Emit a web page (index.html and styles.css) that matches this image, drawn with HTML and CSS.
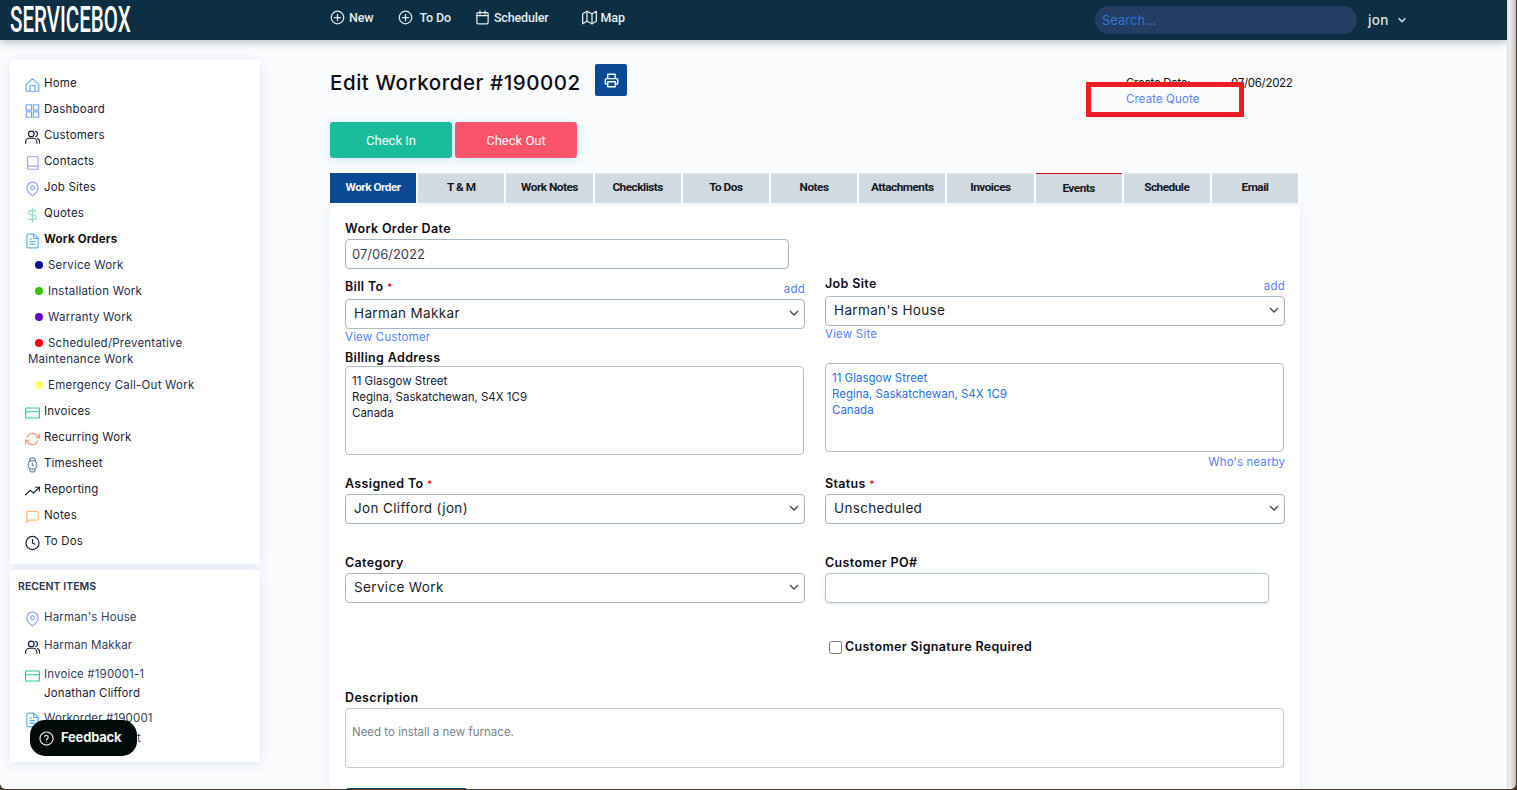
FILE: index.html
```html
<!DOCTYPE html>
<html lang="en">
<head>
<meta charset="utf-8">
<title>Edit Workorder #190002</title>
<link rel="stylesheet" href="styles.css">
</head>
<body>
<svg class="defs" width="0" height="0" aria-hidden="true">
  <symbol id="i-home" viewBox="0 0 24 24"><path d="M2 11 12 2l10 9v11H2z"/><path d="M8 22V13h8v9"/></symbol>
  <symbol id="i-grid" viewBox="0 0 24 24"><rect x="2" y="2" width="8.500" height="8.500"/><rect x="13.500" y="2" width="8.500" height="8.500"/><rect x="2" y="13.500" width="8.500" height="8.500"/><rect x="13.500" y="13.500" width="8.500" height="8.500"/></symbol>
  <symbol id="i-users" viewBox="0 0 24 24"><path d="M1 22v-2a6 6 0 0 1 6-6h6a6 6 0 0 1 6 6v2"/><circle cx="10" cy="7" r="4.500"/><path d="M17 3a4.500 4.500 0 0 1 0 8.500M20 14.500a6 6 0 0 1 3.500 5.500v2"/></symbol>
  <symbol id="i-book" viewBox="0 0 24 24"><path d="M4 19V3a1 1 0 0 1 1-1h16v20H6a2 2 0 0 1-2-2v-1a2 2 0 0 1 2-2h15"/></symbol>
  <symbol id="i-pin" viewBox="0 0 24 24"><path d="M21 10c0 7-9 13-9 13s-9-6-9-13a9 9 0 0 1 18 0z"/><circle cx="12" cy="10" r="3"/></symbol>
  <symbol id="i-dollar" viewBox="0 0 24 24"><path d="M12 1v22M17 5H9.500a3.500 3.500 0 0 0 0 7h5a3.500 3.500 0 0 1 0 7H6"/></symbol>
  <symbol id="i-file" viewBox="0 0 24 24"><path d="M14 1H5a2 2 0 0 0-2 2v18a2 2 0 0 0 2 2h14a2 2 0 0 0 2-2V8z"/><path d="M14 1v7h7M16 13H8M16 17H8M10 9H8"/></symbol>
  <symbol id="i-card" viewBox="0 0 24 24"><rect x="1" y="4" width="22" height="16" rx="1"/><path d="M1 10h22"/></symbol>
  <symbol id="i-refresh" viewBox="0 0 24 24"><path d="M23 4v6h-6M1 20v-6h6"/><path d="M3.500 9a9 9 0 0 1 14.900-3.400L23 10M1 14l4.600 4.400A9 9 0 0 0 20.500 15"/></symbol>
  <symbol id="i-watch" viewBox="0 0 24 24"><circle cx="12" cy="12" r="7"/><path d="M12 9v3l1.500 1.500M16.500 17.500l-.4 4a2 2 0 0 1-2 1.500H9.900a2 2 0 0 1-2-1.500l-.4-4M7.500 6.500l.4-4a2 2 0 0 1 2-1.500h4.200a2 2 0 0 1 2 1.500l.4 4"/></symbol>
  <symbol id="i-trend" viewBox="0 0 24 24"><path d="m23 6-9.500 9.500-5-5L1 18"/><path d="M17 6h6v6"/></symbol>
  <symbol id="i-note" viewBox="0 0 24 24"><path d="M21 15a2 2 0 0 1-2 2H7l-4 4V5a2 2 0 0 1 2-2h14a2 2 0 0 1 2 2z"/></symbol>
  <symbol id="i-clock" viewBox="0 0 24 24"><circle cx="12" cy="12" r="10.500"/><path d="M12 6v6l4 2"/></symbol>
  <symbol id="i-plus" viewBox="0 0 24 24"><circle cx="12" cy="12" r="10"/><path d="M12 7v10M7 12h10"/></symbol>
  <symbol id="i-cal" viewBox="0 0 24 24"><rect x="3" y="4" width="18" height="18" rx="2"/><path d="M16 1.500v5M8 1.500v5M3 9h18"/></symbol>
  <symbol id="i-map" viewBox="0 0 24 24"><path d="M1 6v16l7-4 8 4 7-4V2l-7 4-8-4z"/><path d="M8 2v16M16 6v16"/></symbol>
  <symbol id="i-print" viewBox="0 0 24 24"><path d="M6 9V2h12v7M6 18H4a2 2 0 0 1-2-2v-5a2 2 0 0 1 2-2h16a2 2 0 0 1 2 2v5a2 2 0 0 1-2 2h-2"/><rect x="6" y="14" width="12" height="8"/></symbol>
  <symbol id="i-chev" viewBox="0 0 12 12"><path d="m2 4 4 4 4-4"/></symbol>
  <symbol id="i-help" viewBox="0 0 24 24"><circle cx="12" cy="12" r="10.500"/><path d="M9 9a3 3 0 0 1 5.800 1c0 2-2.800 2.600-2.800 4.200M12 17.500v.1"/></symbol>
</svg>

<div class="window">
  <div class="page">
    <header class="topbar">
      <div class="brand"><span class="brand-text">SERVICEBOX</span></div>
      <nav class="topnav">
        <a class="topnav-item"><svg class="nav-icon"><use href="#i-plus"/></svg>New</a>
        <a class="topnav-item topnav-todo"><svg class="nav-icon"><use href="#i-plus"/></svg><span class="nav-gap">To Do</span></a>
        <a class="topnav-item"><svg class="nav-icon"><use href="#i-cal"/></svg>Scheduler</a>
        <a class="topnav-item topnav-map"><svg class="nav-icon"><use href="#i-map"/></svg>Map</a>
      </nav>
      <div class="search">Search...</div>
      <div class="user">jon<svg class="user-chev"><use href="#i-chev"/></svg></div>
    </header>

    <div class="body">
      <aside class="sidebar">
        <div class="side-card">
          <ul class="side-list">
            <li class="side-item"><svg class="ico c-blue"><use href="#i-home"/></svg>Home</li>
            <li class="side-item"><svg class="ico c-blue"><use href="#i-grid"/></svg>Dashboard</li>
            <li class="side-item"><svg class="ico c-dark"><use href="#i-users"/></svg>Customers</li>
            <li class="side-item"><svg class="ico c-lilac"><use href="#i-book"/></svg>Contacts</li>
            <li class="side-item"><svg class="ico c-peri"><use href="#i-pin"/></svg>Job Sites</li>
            <li class="side-item"><svg class="ico c-mint"><use href="#i-dollar"/></svg>Quotes</li>
            <li class="side-item is-current"><svg class="ico c-sky"><use href="#i-file"/></svg>Work Orders</li>
            <li class="side-sub"><span class="dot d-navy"></span>Service Work</li>
            <li class="side-sub"><span class="dot d-green"></span>Installation Work</li>
            <li class="side-sub"><span class="dot d-purple"></span>Warranty Work</li>
            <li class="side-sub"><span class="dot d-red"></span>Scheduled/Preventative Maintenance Work</li>
            <li class="side-sub"><span class="dot d-yellow"></span>Emergency Call-Out Work</li>
            <li class="side-item"><svg class="ico c-teal"><use href="#i-card"/></svg>Invoices</li>
            <li class="side-item"><svg class="ico c-coral"><use href="#i-refresh"/></svg>Recurring Work</li>
            <li class="side-item"><svg class="ico c-steel"><use href="#i-watch"/></svg>Timesheet</li>
            <li class="side-item"><svg class="ico c-dark"><use href="#i-trend"/></svg>Reporting</li>
            <li class="side-item"><svg class="ico c-amber"><use href="#i-note"/></svg>Notes</li>
            <li class="side-item"><svg class="ico c-dark"><use href="#i-clock"/></svg>To Dos</li>
          </ul>
        </div>
        <div class="side-card recent">
          <h3 class="recent-title">RECENT ITEMS</h3>
          <div class="recent-item"><svg class="ico c-peri"><use href="#i-pin"/></svg>Harman's House</div>
          <div class="recent-item"><svg class="ico c-dark"><use href="#i-users"/></svg>Harman Makkar</div>
          <div class="recent-item recent-invoice"><svg class="ico c-teal"><use href="#i-card"/></svg>Invoice #190001-1<div class="recent-sub">Jonathan Clifford</div></div>
          <div class="recent-item"><svg class="ico c-sky"><use href="#i-file"/></svg>Workorder #190001<div class="recent-sub recent-sub-wide">Furnace Contract</div></div>
        </div>
        <button class="feedback"><svg class="feedback-icon"><use href="#i-help"/></svg>Feedback</button>
      </aside>

      <main class="main">
        <div class="title-row">
          <h1 class="title">Edit Workorder #190002</h1>
          <button class="print"><svg class="print-icon"><use href="#i-print"/></svg></button>
          <div class="meta">
            <div class="meta-line"><span class="meta-key">Create Date:</span><span>07/06/2022</span></div>
            <a class="meta-link">Create Quote</a>
            <div class="highlight"></div>
          </div>
        </div>

        <div class="actions">
          <button class="action check-in">Check In</button>
          <button class="action check-out">Check Out</button>
        </div>

        <div class="tabs">
          <div class="tab is-active">Work Order</div>
          <div class="tab">T &amp; M</div>
          <div class="tab">Work Notes</div>
          <div class="tab">Checklists</div>
          <div class="tab">To Dos</div>
          <div class="tab">Notes</div>
          <div class="tab">Attachments</div>
          <div class="tab">Invoices</div>
          <div class="tab is-flagged">Events</div>
          <div class="tab">Schedule</div>
          <div class="tab">Email</div>
        </div>

        <form class="card">
          <label class="label">Work Order Date</label>
          <input class="input input-short" value="07/06/2022">

          <div class="columns">
            <div class="col col-bill">
              <div class="label-row"><label class="label flush">Bill To <span class="req">*</span></label><a class="link small-add">add</a></div>
              <div class="select"><span>Harman Makkar</span><svg class="chev"><use href="#i-chev"/></svg></div>
              <a class="link under">View Customer</a>
              <label class="label billing-label">Billing Address</label>
              <div class="address billing">11 Glasgow Street<br>Regina, Saskatchewan, S4X 1C9<br>Canada</div>
            </div>
            <div class="col col-site">
              <div class="label-row"><label class="label flush">Job Site</label><a class="link small-add">add</a></div>
              <div class="select"><span>Harman's House</span><svg class="chev"><use href="#i-chev"/></svg></div>
              <a class="link under">View Site</a>
              <div class="address site">11 Glasgow Street<br>Regina, Saskatchewan, S4X 1C9<br>Canada</div>
              <a class="link nearby">Who's nearby</a>
            </div>
          </div>

          <div class="columns row-assign">
            <div class="col">
              <label class="label">Assigned To <span class="req">*</span></label>
              <div class="select"><span>Jon Clifford (jon)</span><svg class="chev"><use href="#i-chev"/></svg></div>
            </div>
            <div class="col">
              <label class="label">Status <span class="req">*</span></label>
              <div class="select"><span>Unscheduled</span><svg class="chev"><use href="#i-chev"/></svg></div>
            </div>
          </div>

          <div class="columns row-category">
            <div class="col">
              <label class="label">Category</label>
              <div class="select"><span>Service Work</span><svg class="chev"><use href="#i-chev"/></svg></div>
            </div>
            <div class="col">
              <label class="label">Customer PO#</label>
              <input class="input input-po">
            </div>
          </div>

          <div class="columns row-sign">
            <div class="col"></div>
            <div class="col"><label class="check"><input class="checkbox" type="checkbox">Customer Signature Required</label></div>
          </div>

          <label class="label desc-label">Description</label>
          <div class="description">Need to install a new furnace.</div>
          <button class="save" aria-label="Save"></button>
        </form>
      </main>
    </div>
  </div>
  <div class="scrollbar"></div>
</div>
</body>
</html>
```

FILE: styles.css
```css
* { box-sizing: border-box; }
html, body { margin: 0; padding: 0; height: 100%; overflow: hidden; background: #4a3b2a; }
body { font-family: Inter, "Noto Sans", sans-serif; color: #1b2030; }
.defs { position: absolute; }
a { cursor: pointer; }
ul { list-style: none; margin: 0; padding: 0; }
button { font: inherit; border: 0; cursor: pointer; }

.window { display: flex; height: 789px; width: 1516px; border-radius: 0 0 6px 6px; overflow: hidden; background: #f9fbfd; }
.page { width: 1507px; flex: none; overflow: hidden; }
.scrollbar { flex: 1; background: linear-gradient(90deg, #dcdcdc, #eeeeee 30%, #cfcfcf 80%, #b5b5b5); }

/* top bar */
.topbar { height: 40px; background: #0c2f43; display: flex; align-items: center; padding: 0 89px 0 10px; box-shadow: 0 2px 8px rgba(40,70,90,.35); position: relative; }
.brand { width: 320px; flex: none; height: 40px; line-height: 39px; }
.brand-text { display: inline-block; font-family: Roboto, sans-serif; font-weight: 500; font-size: 37px; color: #fff; transform: scaleX(.555); transform-origin: left center; white-space: nowrap; }
.topnav { display: flex; gap: 25px; margin-top: -5px; }
.topnav-item { display: flex; align-items: center; gap: 4px; font-family: Roboto, sans-serif; font-weight: 500; font-size: 12.500px; letter-spacing: -.15px; color: #e6ecef; }
.topnav-todo { margin-right: -1px; }
.topnav-map { margin-left: 8px; }
.nav-gap { margin-left: 2px; }
.nav-icon { width: 15px; height: 15px; fill: none; stroke: #e6ecef; stroke-width: 2; stroke-linecap: round; stroke-linejoin: round; }
.search { margin-left: auto; width: 262px; height: 28px; border-radius: 14px; background: #233d63; color: #2b77d0; font-size: 13px; line-height: 28px; padding-left: 7px; }
.user { margin-left: 11px; width: 50px; display: flex; align-items: center; color: #dce2e5; font-size: 13.500px; font-weight: 500; letter-spacing: .3px; }
.user-chev { width: 10px; height: 10px; margin-left: 8px; fill: none; stroke: #dce2e5; stroke-width: 1.800; }

/* layout */
.body { display: flex; align-items: flex-start; padding-top: 20px; }
.sidebar { width: 250px; margin-left: 10px; flex: none; display: flex; flex-direction: column; gap: 6px; position: relative; }
.main { width: 970px; margin-left: 70px; flex: none; }

/* sidebar */
.side-card { background: #fff; box-shadow: 0 2px 10px rgba(130,150,200,.18); }
.side-list { padding: 10px 0; }
.side-item { height: 26px; line-height: 16px; padding: 5px 0 5px 15px; font-size: 11.500px; letter-spacing: .2px; color: #1b2030; white-space: nowrap; }
.side-item.is-current { font-weight: 700; color: #111; }
.side-sub { padding: 5px 10px 5px 18px; line-height: 16px; font-size: 11.500px; letter-spacing: .23px; color: #27304a; }
.dot { display: inline-block; width: 8px; height: 8px; border-radius: 50%; margin: 0 5px 0 7px; }
.d-navy { background: #0a0a8c; }
.d-green { background: #35c40c; }
.d-purple { background: #5f0ac0; }
.d-red { background: #f5000f; }
.d-yellow { background: #ffff66; }
.ico { display: inline-block; width: 15px; height: 16px; margin: -4px 4px -4px 0; vertical-align: -2px; fill: none; stroke-width: 1.900; stroke-linecap: round; stroke-linejoin: round; }
.c-blue { stroke: #72a9f7; }
.c-dark { stroke: #15213a; }
.c-lilac { stroke: #a9a6ec; }
.c-peri { stroke: #8ea3f5; }
.c-mint { stroke: #8fdcc2; }
.c-sky { stroke: #56b3fa; }
.c-teal { stroke: #2fc7a3; }
.c-coral { stroke: #ff8e75; }
.c-steel { stroke: #6a8aa8; }
.c-amber { stroke: #ffbd6b; }

.recent { height: 192px; padding: 8px 0 0 15px; overflow: hidden; }
.recent-title { margin: 0 0 15px -7px; font-size: 10.500px; line-height: 18px; height: 16px; font-weight: 600; color: #2a3348; letter-spacing: .05px; }
.recent-item { line-height: 16px; font-size: 11.500px; letter-spacing: .15px; color: #33405a; margin-bottom: 12px; }
.recent-invoice { margin-top: 13px; margin-bottom: 9px; }
.recent-sub { margin: 3px 0 0 19px; color: #1b2030; }
.recent-sub-wide { margin-top: 4px; color: #2a4a80; }
.feedback { position: absolute; left: 20px; top: 660px; width: 107px; height: 36px; border-radius: 15px; background: #020a0a; color: #f2f4f4; font-weight: 700; font-size: 13px; display: flex; align-items: center; padding: 0 0 2px 9px; gap: 7px; letter-spacing: -.2px; }
.feedback-icon { width: 15px; height: 15px; fill: none; stroke: #f2f4f4; stroke-width: 1.800; stroke-linecap: round; flex: none; margin-top: 2px; }

/* title */
.title-row { display: flex; align-items: flex-start; height: 62px; padding-top: 4px; }
.title { margin: 8px 0 0; font-size: 20.500px; font-weight: 500; line-height: 22px; color: #0e0e14; letter-spacing: .55px; white-space: nowrap; width: 265px; }
.print { width: 32px; height: 32px; border-radius: 2px; background: #0a4a94; padding: 0; display: flex; align-items: center; justify-content: center; }
.print-icon { width: 15px; height: 15px; fill: none; stroke: #fff; stroke-width: 2.200; stroke-linejoin: round; }
.meta { position: relative; margin-left: 499px; margin-top: 11px; font-size: 11.500px; line-height: 16px; color: #111; }
.meta-line { display: flex; white-space: nowrap; letter-spacing: -.3px; }
.meta-key { width: 105px; }
.meta-link { display: block; color: #5b80f5; letter-spacing: .1px; }
.highlight { position: absolute; left: -40px; top: 7px; width: 158px; height: 35px; border: 5px solid #ee1c25; }

/* buttons */
.actions { display: flex; gap: 3px; }
.action { width: 122px; height: 36px; border-radius: 3px; color: #fff; font-family: Roboto, sans-serif; font-size: 13px; box-shadow: 0 2px 8px rgba(110,190,230,.3); }
.check-in { background: #1abc9c; }
.check-out { background: #f9546c; }

/* tabs */
.tabs { display: flex; gap: 2px; width: 968px; margin-top: 15px; }
.tab { flex: 1; height: 30px; background: #d2dae1; border-top: 1px solid #e6eaee; font-family: Roboto, sans-serif; font-weight: 700; font-size: 11.800px; letter-spacing: -.5px; line-height: 27px; text-align: center; color: #15181c; }
.tab.is-active { background: #0a4a94; color: #eef4fb; border-top-color: #0a4a94; }
.tab.is-flagged { border-top-color: #c5141c; line-height: 29px; }

/* form card */
.card { margin-top: 3px; background: #fff; padding: 14px 15px 40px; box-shadow: 0 2px 10px rgba(130,150,200,.15); }
.label { display: block; font-size: 12.500px; font-weight: 600; line-height: 18px; height: 16px; color: #0e0e14; margin-bottom: 3px; letter-spacing: .35px; }
.flush { margin: 0; }
.req { color: #f01010; font-size: 10px; }
.input { display: block; height: 30px; border: 1px solid #a7b8c4; border-radius: 4px; background: #fff; font: inherit; font-size: 13px; color: #3a4250; padding: 0 6px; outline: none; }
.input-short { width: 444px; }
.input-po { width: 444px; border-color: #b4c3ce; box-shadow: 0 1px 3px rgba(120,140,160,.25); }
.select { display: flex; align-items: center; justify-content: space-between; height: 30px; border: 1px solid #a7b8c4; border-radius: 4px; background: #fff; padding: 0 4px 2px 8px; font-size: 13.500px; letter-spacing: .35px; color: #1b1f2a; }
.chev { width: 12px; height: 12px; fill: none; stroke: #3a4a5a; stroke-width: 1.300; }
.columns { display: grid; grid-template-columns: 460px 460px; column-gap: 20px; }
.col-bill { padding-top: 9px; }
.col-site { padding-top: 6px; }
.label-row { display: flex; justify-content: space-between; align-items: flex-end; margin-bottom: 5px; }
.link { color: #5b80f5; font-size: 11.500px; line-height: 16px; letter-spacing: .2px; }
.small-add { margin-bottom: -3px; }
.under { display: block; height: 16px; }
.billing-label { margin: 4px 0 1px; }
.address { height: 89px; border: 1px solid #b5bdc4; border-radius: 4px; padding: 6px; font-size: 11.500px; line-height: 16px; width: 459px; }
.billing { color: #1b2030; }
.site { color: #2a6fe8; margin-top: 21px; }
.nearby { display: block; text-align: right; margin-top: 2px; letter-spacing: .1px; }
.row-assign { margin-top: 5px; }
.row-category { margin-top: 30px; }
.row-sign { margin-top: 36px; }
.check { display: flex; align-items: center; padding-left: 4px; font-size: 12.500px; font-weight: 600; line-height: 18px; height: 16px; color: #0e0e14; letter-spacing: .35px; }
.checkbox { width: 13px; height: 13px; margin: 1px 3px 0 0; }
.desc-label { margin-top: 34px; }
.description { height: 60px; width: 939px; border: 1px solid #c4c8cc; border-radius: 4px; padding: 15px 6px; font-size: 11.500px; line-height: 16px; color: #7c828a; }
.save { display: block; margin-top: 20px; width: 123px; height: 36px; border-radius: 4px; background: #0a4a94; color: #fff; }
```
